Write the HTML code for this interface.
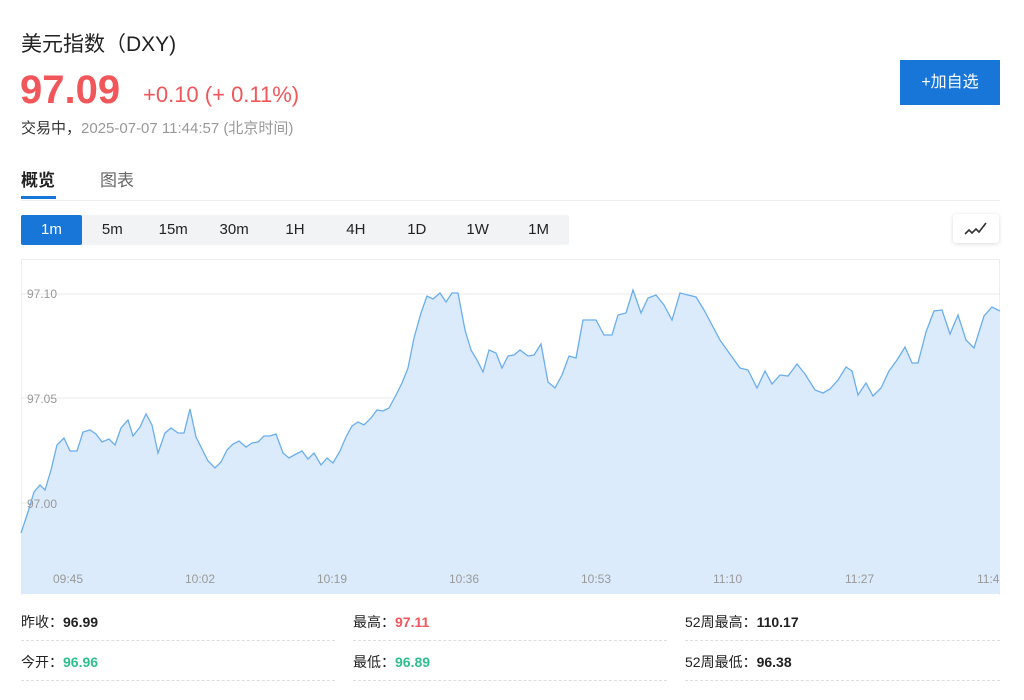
<!DOCTYPE html>
<html><head><meta charset="utf-8"><style>
*{margin:0;padding:0;box-sizing:border-box}
body{width:1024px;height:700px;background:#fff;font-family:"Liberation Sans","Noto Sans CJK SC",sans-serif;position:relative;overflow:hidden;color:#222}
.a{position:absolute;white-space:nowrap}
.btns{position:absolute;left:21px;top:215px;width:548px;height:30px;background:#f2f3f5;border-radius:2px;display:flex}
.btns div{width:61px;text-align:center;line-height:30px;font-size:15px;color:#222}
.btns div.on{background:#1976d9;color:#fff;border-radius:2px}
.row{position:absolute;font-size:14px;color:#222}
.row b{font-weight:bold}
.dl{position:absolute;height:0;border-top:1px dashed #ddd}
</style></head><body>
<div class="a" style="left:21px;top:28px;font-size:21px;color:#222">美元指数（DXY)</div>
<div class="a" style="left:20px;top:68px;font-size:40px;font-weight:bold;color:#f0565a">97.09</div>
<div class="a" style="left:143px;top:82px;font-size:22px;color:#f0565a">+0.10 (+ 0.11%)</div>
<div class="a" style="left:21px;top:117px;font-size:15px;color:#333">交易中，<span style="color:#999">2025-07-07 11:44:57 (北京时间)</span></div>
<div class="a" style="left:900px;top:60px;width:100px;height:45px;background:#1976d9;color:#fff;font-size:16px;text-align:center;line-height:45px">+加自选</div>
<div class="a" style="left:21px;top:166px;font-size:17px;font-weight:bold;color:#222">概览</div>
<div class="a" style="left:21px;top:196px;width:35px;height:3px;background:#1976d9"></div>
<div class="a" style="left:100px;top:166px;font-size:17px;color:#666">图表</div>
<div class="a" style="left:21px;top:200px;width:979px;height:1px;background:#eee"></div>
<div class="btns"><div class="on">1m</div><div>5m</div><div>15m</div><div>30m</div><div>1H</div><div>4H</div><div>1D</div><div>1W</div><div>1M</div></div>
<div class="a" style="left:953px;top:214px;width:46px;height:29px;background:#fff;border-radius:3px;box-shadow:0 1px 4px rgba(0,0,0,.15)">
<svg width="46" height="29"><path d="M12 20 L16 16 L19 19 L23 15 L26 18 L33 9" fill="none" stroke="#333" stroke-width="1.6"/></svg></div>
<div class="a" style="left:21px;top:259px;width:979px;height:336px;border:1px solid #eee;border-bottom:none"></div>
<svg class="a" style="left:0;top:0" width="1024" height="600">
<line x1="21" y1="294" x2="1000" y2="294" stroke="#e8e8e8"/>
<line x1="21" y1="398" x2="1000" y2="398" stroke="#e8e8e8"/>
<line x1="21" y1="503" x2="1000" y2="503" stroke="#e8e8e8"/>
<polygon fill="#dcebfb" points="21,594 21,533 28,512 34,492 40,485 45,490 51,470 57,445 64,438 70,451 77,451 83,432 90,430 96,434 102,442 109,439 115,445 121,428 128,420 133,436 140,427 146,414 152,425 158,453 165,433 171,428 178,433 184,433 190,409 196,437 202,449 208,461 215,468 221,462 227,450 233,444 239,441 246,447 252,443 258,442 264,436 270,436 276,434 283,453 289,458 296,454 302,451 308,459 314,453 321,465 327,458 333,463 340,451 346,437 352,426 358,422 364,425 371,418 377,410 383,411 389,408 396,395 402,383 408,368 414,338 421,313 427,296 433,299 440,293 446,302 452,293 458,293 465,330 471,350 477,360 483,372 489,350 496,353 502,368 508,356 514,355 520,350 528,356 534,355 541,344 548,382 555,388 562,375 569,356 576,358 583,320 590,320 596,320 604,335 612,335 618,315 626,313 633,290 641,313 648,298 656,295 664,305 672,320 680,293 688,295 696,297 704,310 712,325 720,340 727,350 740,368 748,370 757,388 765,371 772,384 780,375 788,376 797,364 805,374 815,390 823,393 830,389 838,380 846,367 852,371 858,395 866,383 873,396 881,388 889,371 897,360 905,347 912,363 918,363 926,332 934,311 942,310 950,334 958,315 966,340 974,348 984,316 992,307 1000,311 1000,594"/>
<polyline fill="none" stroke="#6aaef0" stroke-width="1.3" points="21,533 28,512 34,492 40,485 45,490 51,470 57,445 64,438 70,451 77,451 83,432 90,430 96,434 102,442 109,439 115,445 121,428 128,420 133,436 140,427 146,414 152,425 158,453 165,433 171,428 178,433 184,433 190,409 196,437 202,449 208,461 215,468 221,462 227,450 233,444 239,441 246,447 252,443 258,442 264,436 270,436 276,434 283,453 289,458 296,454 302,451 308,459 314,453 321,465 327,458 333,463 340,451 346,437 352,426 358,422 364,425 371,418 377,410 383,411 389,408 396,395 402,383 408,368 414,338 421,313 427,296 433,299 440,293 446,302 452,293 458,293 465,330 471,350 477,360 483,372 489,350 496,353 502,368 508,356 514,355 520,350 528,356 534,355 541,344 548,382 555,388 562,375 569,356 576,358 583,320 590,320 596,320 604,335 612,335 618,315 626,313 633,290 641,313 648,298 656,295 664,305 672,320 680,293 688,295 696,297 704,310 712,325 720,340 727,350 740,368 748,370 757,388 765,371 772,384 780,375 788,376 797,364 805,374 815,390 823,393 830,389 838,380 846,367 852,371 858,395 866,383 873,396 881,388 889,371 897,360 905,347 912,363 918,363 926,332 934,311 942,310 950,334 958,315 966,340 974,348 984,316 992,307 1000,311"/>
<g font-family="Liberation Sans" font-size="12" fill="#999">
<text x="27" y="298">97.10</text><text x="27" y="403">97.05</text><text x="27" y="508">97.00</text>
<text x="53" y="583">09:45</text><text x="185" y="583">10:02</text><text x="317" y="583">10:19</text><text x="449" y="583">10:36</text><text x="581" y="583">10:53</text><text x="713" y="583">11:10</text><text x="845" y="583">11:27</text><text x="977" y="583">11:4</text>
</g></svg>
<div class="row" style="left:21px;top:612px">昨收：<b>96.99</b></div>
<div class="row" style="left:353px;top:612px">最高：<b style="color:#f0565a">97.11</b></div>
<div class="row" style="left:685px;top:612px">52周最高：<b>110.17</b></div>
<div class="dl" style="left:21px;top:640px;width:314px"></div>
<div class="dl" style="left:353px;top:640px;width:314px"></div>
<div class="dl" style="left:685px;top:640px;width:315px"></div>
<div class="row" style="left:21px;top:652px">今开：<b style="color:#2fbf8f">96.96</b></div>
<div class="row" style="left:353px;top:652px">最低：<b style="color:#2fbf8f">96.89</b></div>
<div class="row" style="left:685px;top:652px">52周最低：<b>96.38</b></div>
<div class="dl" style="left:21px;top:680px;width:314px"></div>
<div class="dl" style="left:353px;top:680px;width:314px"></div>
<div class="dl" style="left:685px;top:680px;width:315px"></div>
</body></html>
